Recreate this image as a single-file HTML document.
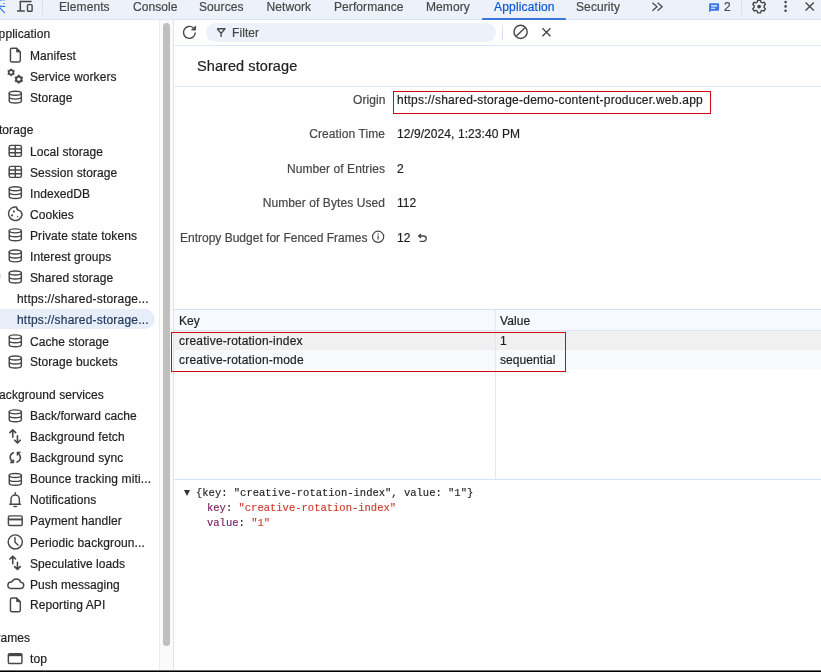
<!DOCTYPE html>
<html><head><meta charset="utf-8">
<style>
*{margin:0;padding:0;box-sizing:border-box}
html,body{width:821px;height:672px;overflow:hidden;background:#fff}
body{will-change:transform;position:relative;font-family:"Liberation Sans",sans-serif;font-size:12px;color:#1f1f1f}
.a{position:absolute}
.t{position:absolute;white-space:nowrap;line-height:14px;font-size:12px;-webkit-text-stroke:0.2px currentColor;letter-spacing:0.08px}
svg{position:absolute;overflow:visible}
.ic{fill:none;stroke:#474747;stroke-width:1.5;stroke-linecap:round;stroke-linejoin:round}
</style></head><body>

<!-- top toolbar -->
<div class="a" style="left:0;top:0;width:821px;height:19px;background:#edf2fa"></div>
<div class="a" style="left:0;top:19px;width:821px;height:1px;background:#d9e4f8"></div>
<div class="a" style="left:42px;top:0;width:1px;height:14px;background:#d6e0f5"></div>
<div class="t" style="left:59px;top:0px;color:#474747">Elements</div>
<div class="t" style="left:133px;top:0px;color:#474747">Console</div>
<div class="t" style="left:199px;top:0px;color:#474747">Sources</div>
<div class="t" style="left:266.5px;top:0px;color:#474747">Network</div>
<div class="t" style="left:334px;top:0px;color:#474747">Performance</div>
<div class="t" style="left:426px;top:0px;color:#474747">Memory</div>
<div class="t" style="left:494px;top:0px;color:#0b57d0;letter-spacing:0.18px">Application</div>
<div class="t" style="left:576px;top:0px;color:#474747;letter-spacing:0.1px">Security</div>
<div class="a" style="left:482px;top:18px;width:84px;height:2px;background:#3a76e0;border-radius:1px 1px 0 0"></div>
<div class="t" style="left:724px;top:0px;color:#474747">2</div>
<div class="a" style="left:741px;top:0;width:1px;height:14px;background:#d6e0f5"></div>

<!-- sidebar -->
<div class="a" style="left:159px;top:20px;width:1px;height:652px;background:#ececec"></div>
<div class="a" style="left:160px;top:20px;width:13px;height:652px;background:#fafafa"></div>
<div class="a" style="left:163px;top:23px;width:7px;height:623px;background:#bfbfbf;border-radius:3.5px"></div>
<div class="a" style="left:173px;top:20px;width:1px;height:652px;background:#dbe5f8"></div>

<div class="a" style="left:-12px;top:309px;width:167px;height:20px;background:#e8eef9;border-radius:10px"></div>

<div class="t" style="left:-9.5px;top:27px;letter-spacing:0.1px">Application</div>
<div class="t" style="left:30px;top:49px">Manifest</div>
<div class="t" style="left:30px;top:70px">Service workers</div>
<div class="t" style="left:30px;top:91px">Storage</div>
<div class="t" style="left:-9.2px;top:123px">Storage</div>
<div class="t" style="left:30px;top:145px">Local storage</div>
<div class="t" style="left:30px;top:166px">Session storage</div>
<div class="t" style="left:30px;top:187px">IndexedDB</div>
<div class="t" style="left:30px;top:208px">Cookies</div>
<div class="t" style="left:30px;top:229px">Private state tokens</div>
<div class="t" style="left:30px;top:250px">Interest groups</div>
<div class="t" style="left:30px;top:271px">Shared storage</div>
<div class="t" style="left:17px;top:292px;letter-spacing:0.2px">https://shared-storage...</div>
<div class="t" style="left:17px;top:313px;color:#23395f;letter-spacing:0.2px">https://shared-storage...</div>
<div class="t" style="left:30px;top:335px">Cache storage</div>
<div class="t" style="left:30px;top:355px">Storage buckets</div>
<div class="t" style="left:-9px;top:388px">Background services</div>
<div class="t" style="left:30px;top:409px">Back/forward cache</div>
<div class="t" style="left:30px;top:430px">Background fetch</div>
<div class="t" style="left:30px;top:451px">Background sync</div>
<div class="t" style="left:30px;top:472px;letter-spacing:0.14px">Bounce tracking miti...</div>
<div class="t" style="left:30px;top:493px">Notifications</div>
<div class="t" style="left:30px;top:514px">Payment handler</div>
<div class="t" style="left:30px;top:536px;letter-spacing:0.1px">Periodic backgroun...</div>
<div class="t" style="left:30px;top:557px;letter-spacing:0.06px">Speculative loads</div>
<div class="t" style="left:30px;top:578px">Push messaging</div>
<div class="t" style="left:30px;top:598px;letter-spacing:0.1px">Reporting API</div>
<div class="t" style="left:-11px;top:631px">Frames</div>
<div class="t" style="left:30px;top:652px">top</div>

<!-- sub toolbar -->
<div class="a" style="left:206px;top:23px;width:290px;height:19px;background:#edf2fa;border-radius:9.5px"></div>
<div class="t" style="left:232px;top:26px;color:#474747">Filter</div>
<div class="a" style="left:502px;top:25px;width:1px;height:15px;background:#d6e0f5"></div>
<div class="a" style="left:174px;top:45px;width:647px;height:1px;background:#dbe5f8"></div>

<!-- title -->
<div class="t" style="left:197px;top:58px;font-size:14.5px;line-height:17px;color:#1f1f1f">Shared storage</div>
<div class="a" style="left:174px;top:86px;width:647px;height:1px;background:#dbe5f8"></div>

<!-- details -->
<div class="t" style="left:353px;top:93px;color:#474747;width:32px;text-align:right">Origin</div>
<div class="t" style="left:397px;top:93px;letter-spacing:0.24px">https://shared-storage-demo-content-producer.web.app</div>
<div class="a" style="left:393px;top:91px;width:318px;height:23px;border:1.5px solid #cc0a10"></div>
<div class="t" style="left:285px;top:127px;color:#474747;width:100px;text-align:right">Creation Time</div>
<div class="t" style="left:397px;top:127px">12/9/2024, 1:23:40 PM</div>
<div class="t" style="left:285px;top:162px;color:#474747;width:100px;text-align:right">Number of Entries</div>
<div class="t" style="left:397px;top:162px">2</div>
<div class="t" style="left:235px;top:196px;color:#474747;width:150px;text-align:right">Number of Bytes Used</div>
<div class="t" style="left:397px;top:196px">112</div>
<div class="t" style="left:180px;top:231px;color:#474747;letter-spacing:0">Entropy Budget for Fenced Frames</div>
<div class="t" style="left:397px;top:231px">12</div>

<!-- table -->
<div class="a" style="left:174px;top:309px;width:647px;height:1px;background:#d3e2fb"></div>
<div class="a" style="left:174px;top:310px;width:647px;height:20px;background:#f7f9fe"></div>
<div class="a" style="left:174px;top:330px;width:647px;height:1px;background:#d9e5fb"></div>
<div class="a" style="left:174px;top:331px;width:647px;height:19px;background:#f0f0f0"></div>
<div class="a" style="left:174px;top:350px;width:647px;height:19px;background:#f8f9fd"></div>
<div class="a" style="left:495px;top:310px;width:1px;height:169px;background:#dfe8fa"></div>
<div class="a" style="left:174px;top:479px;width:647px;height:1px;background:#d3e2fb"></div>
<div class="t" style="left:179px;top:314px">Key</div>
<div class="t" style="left:500px;top:314px">Value</div>
<div class="t" style="left:179px;top:334px;letter-spacing:0.22px">creative-rotation-index</div>
<div class="t" style="left:500px;top:334px">1</div>
<div class="t" style="left:179px;top:353px;letter-spacing:0.22px">creative-rotation-mode</div>
<div class="t" style="left:500px;top:353px">sequential</div>
<div class="a" style="left:171px;top:332px;width:395px;height:40px;border:1.5px solid #cc0a10"></div>

<!-- preview -->
<div class="a" style="left:184px;top:490px;width:0;height:0;border-left:3.3px solid transparent;border-right:3.3px solid transparent;border-top:6px solid #333"></div>
<div class="a" style="left:196px;top:486px;font-family:'Liberation Mono',monospace;font-size:10.5px;line-height:14px;-webkit-text-stroke:0.15px currentColor;white-space:nowrap;color:#1f1f1f">{key: "creative-rotation-index", value: "1"}</div>
<div class="a" style="left:207px;top:501px;font-family:'Liberation Mono',monospace;font-size:10.5px;line-height:14px;-webkit-text-stroke:0.15px currentColor;white-space:nowrap;color:#1f1f1f"><span style="color:#7e2266">key</span>: <span style="color:#cf3a2e">"creative-rotation-index"</span></div>
<div class="a" style="left:207px;top:516px;font-family:'Liberation Mono',monospace;font-size:10.5px;line-height:14px;-webkit-text-stroke:0.15px currentColor;white-space:nowrap;color:#1f1f1f"><span style="color:#7e2266">value</span>: <span style="color:#cf3a2e">"1"</span></div>

<!-- toolbar icons -->
<svg class="a" style="left:0;top:0" width="821" height="672" viewBox="0 0 821 672">
<g fill="none" stroke="#3a78ee" stroke-width="1.3" stroke-linecap="butt">
<path d="M-1 0.5H1.9M3.2 0.4H4.8M3.1 3.45H4.9" stroke-width="1" opacity="0.7"/>
<path d="M-2 6.3H4.8M-1 6.8L4.3 12.6" stroke-linecap="round"/>
</g>
<g fill="none" stroke="#474747" stroke-width="1.3">
<path d="M31.6 1.5H20.3V10.8M17 10.9H24.8" stroke-width="1.5"/>
<rect x="27.5" y="4.6" width="4.6" height="6.7" rx="0.8" stroke-width="1.4"/>
</g>
<path d="M652.4 2.7L657 6.7L652.4 10.7M657.6 2.7L662.2 6.7L657.6 10.7" fill="none" stroke="#474747" stroke-width="1.25"/>
<path d="M710.3 3.3H718.3A0.8 0.8 0 0 1 719.1 4.1V10A0.8 0.8 0 0 1 718.3 10.8H711.3L709.1 12.2V4.5A1.2 1.2 0 0 1 710.3 3.3Z" fill="#3b77ea"/>
<path d="M711.1 5.9H717.1M711.1 8.3H715.1" stroke="#fff" stroke-width="1.1"/>
<g transform="translate(759.1 6.6)">
<path fill="none" stroke="#474747" stroke-width="1.4" stroke-linejoin="round" d="M-1.4 -6.3H1.4L1.8 -4.6L3.3 -3.8L5 -4.4L6.3 -2.2L5 -1V1L6.3 2.2L5 4.4L3.3 3.8L1.8 4.6L1.4 6.3H-1.4L-1.8 4.6L-3.3 3.8L-5 4.4L-6.3 2.2L-5 1V-1L-6.3 -2.2L-5 -4.4L-3.3 -3.8L-1.8 -4.6Z"/>
<circle r="1.9" fill="#474747"/>
</g>
<circle cx="785.6" cy="2.1" r="1.3" fill="#474747"/><circle cx="785.6" cy="6.4" r="1.3" fill="#474747"/><circle cx="785.6" cy="10.7" r="1.3" fill="#474747"/>
<path d="M805.6 2.6L813.8 10.6M813.8 2.6L805.6 10.6" stroke="#474747" stroke-width="1.35"/>
<!-- sub toolbar -->
<path d="M195.35 32.5A5.95 5.95 0 1 1 193.2 27.8" fill="none" stroke="#474747" stroke-width="1.4"/>
<path d="M195.6 25.9V30.1H191.4Z" fill="#474747" stroke="#474747" stroke-width="0.7" stroke-linejoin="round"/>
<path d="M217.2 28.7H225L221.1 33.4V36.9M217.2 28.7L221.1 33.4" fill="none" stroke="#474747" stroke-width="1.35" stroke-linejoin="round"/>
<circle cx="520.6" cy="31.9" r="6.6" fill="none" stroke="#474747" stroke-width="1.4"/>
<path d="M516.4 36.1L524.9 27.7" stroke="#474747" stroke-width="1.4"/>
<path d="M542.4 28.3L550.5 36.2M550.5 28.3L542.4 36.2" stroke="#474747" stroke-width="1.35"/>
<!-- info / reset -->
<circle cx="378.1" cy="236.8" r="5.6" fill="none" stroke="#474747" stroke-width="1.2"/>
<path d="M378.1 235.6V239.6" stroke="#474747" stroke-width="1.2"/>
<circle cx="378.1" cy="233.9" r="0.7" fill="#474747"/>
<path d="M421 233.9L418.6 236L421 238.1M418.8 236H423.6A2.6 2.6 0 0 1 423.6 241.3H419.6" fill="none" stroke="#474747" stroke-width="1.3"/>
</svg>

<!-- sidebar icons -->
<svg class="a" style="left:0;top:0" width="821" height="672" viewBox="0 0 821 672">
<defs>
<g id="db" class="ic" style="stroke-width:1.45"><ellipse cx="15.3" cy="2.65" rx="6.05" ry="2"/><path d="M9.25 2.65V10.55A6.05 2 0 0 0 21.35 10.55V2.65M9.25 6.6A6.05 2 0 0 0 21.35 6.6"/></g>
<g id="grid" class="ic" style="stroke-width:1.45"><rect x="9.2" y="0.75" width="12.2" height="11" rx="1.6"/><path d="M15.3 0.75V11.75M9.2 4.45H21.4M9.2 8.05H21.4"/></g>
<g id="doc"><path class="ic" style="stroke-width:1.45" d="M10.45 2.2a1.5 1.5 0 0 1 1.5-1.5H16.6L20.3 4.4V12.9a1.5 1.5 0 0 1-1.5 1.5H11.95a1.5 1.5 0 0 1-1.5-1.5Z"/><path d="M16.6 0.72V4.4H20.3Z" fill="#474747" stroke="#474747" stroke-width="0.8" stroke-linejoin="round"/></g>
<g id="arrows"><path class="ic" style="stroke-width:1.6" d="M12.75 2V8.3M9.9 3.6L12.75 0.8L15.6 3.6M17.45 6.8V13.2M14.6 11.2L17.45 14L20.3 11.2"/><path d="M12.75 0.6L10.6 2.9H14.9Z M17.45 14.2L15.3 11.9H19.6Z" fill="#474747"/></g>
</defs>
<use href="#doc" x="0" y="47.6"/>
<polygon fill="#474747" stroke="#474747" stroke-width="0.3" stroke-linejoin="round" points="11.10,68.45 12.57,69.85 14.52,70.43 14.05,72.40 14.52,74.38 12.57,74.95 11.10,76.35 9.62,74.95 7.68,74.38 8.15,72.40 7.68,70.43 9.62,69.85"/>
<circle cx="11.1" cy="72.4" r="1.35" fill="#fff"/>
<polygon fill="#474747" stroke="#474747" stroke-width="0.3" stroke-linejoin="round" points="18.80,74.60 20.55,76.17 22.78,76.90 22.30,79.20 22.78,81.50 20.55,82.23 18.80,83.80 17.05,82.23 14.82,81.50 15.30,79.20 14.82,76.90 17.05,76.17"/>
<circle cx="18.8" cy="79.2" r="1.65" fill="#fff"/>
<use href="#db" x="0" y="90.5"/>
<use href="#grid" x="0" y="144.6"/>
<use href="#grid" x="0" y="165.6"/>
<use href="#db" x="0" y="186"/>
<!-- cookie -->
<path class="ic" style="stroke-width:1.45" d="M22.05 214.6A6.8 6.8 0 1 1 16.4 207.0Q17.0 210.2 19.6 210.6Q21.8 211.4 22.05 214.6Z"/>
<circle cx="13.9" cy="211.6" r="1.05" fill="#474747"/><circle cx="12.1" cy="215.4" r="1.05" fill="#474747"/><circle cx="17.6" cy="216.5" r="0.85" fill="#6a6a6a"/>
<use href="#db" x="0" y="228.2"/>
<use href="#db" x="0" y="249.3"/>
<use href="#db" x="0" y="270.4"/>
<use href="#db" x="0" y="334.2"/>
<use href="#db" x="0" y="355.4"/>
<use href="#db" x="0" y="409.2"/>
<use href="#arrows" x="0" y="429"/>
<!-- sync -->
<path class="ic" style="stroke-width:1.6" d="M13.4 452.8Q9.9 454.4 10.2 457.8Q10.5 460.4 12.9 461.4M17.1 462.1Q20.6 460.5 20.4 457.1Q20.1 454.5 17.8 453.4"/>
<path d="M10.1 462.9H13.8V459.5Z" fill="#474747" stroke="#474747" stroke-width="0.7" stroke-linejoin="round"/>
<path d="M20.6 452.1H17V455.5Z" fill="#474747" stroke="#474747" stroke-width="0.7" stroke-linejoin="round"/>
<use href="#db" x="0" y="472.8"/>
<!-- bell -->
<g class="ic" style="stroke-width:1.45"><path d="M9.8 504.3H20.6M11 504.3V499.2A4.2 4.2 0 0 1 19.4 499.2V504.3M15.2 492.6V494.8M14 506.4H16.4"/></g>
<!-- card -->
<g class="ic" style="stroke-width:1.45"><rect x="8.4" y="515.85" width="13.8" height="9.7" rx="1.4"/></g>
<rect x="8.4" y="518.5" width="13.8" height="1.9" fill="#474747"/>
<!-- clock -->
<g class="ic" style="stroke-width:1.45"><circle cx="15.25" cy="541.9" r="7.05"/><path d="M15 537.4V542.2L18 545"/></g>
<use href="#arrows" x="0" y="555.4"/>
<!-- cloud -->
<g class="ic" style="stroke-width:1.45"><path d="M10.5 588.4H20.6A3 3 0 0 0 20.9 582.4A4.9 4.9 0 0 0 11.7 582.1A3.2 3.2 0 0 0 10.5 588.4Z"/></g>
<use href="#doc" x="0" y="597.3"/>
<!-- frame -->
<g class="ic" style="stroke-width:1.45"><rect x="8.35" y="653.65" width="13.6" height="9.9" rx="1.2"/></g>
<rect x="8.35" y="654" width="13.6" height="2.2" fill="#474747"/>
</svg>

<div class="a" style="left:0;top:273px;width:1px;height:5px;background:#e2e2e2;border-radius:0 1px 1px 0"></div>
<!-- bottom line -->
<div class="a" style="left:0;top:670px;width:821px;height:1px;background:#6e6e6e"></div>
<div class="a" style="left:0;top:671px;width:821px;height:1px;background:#000"></div>

</body></html>
